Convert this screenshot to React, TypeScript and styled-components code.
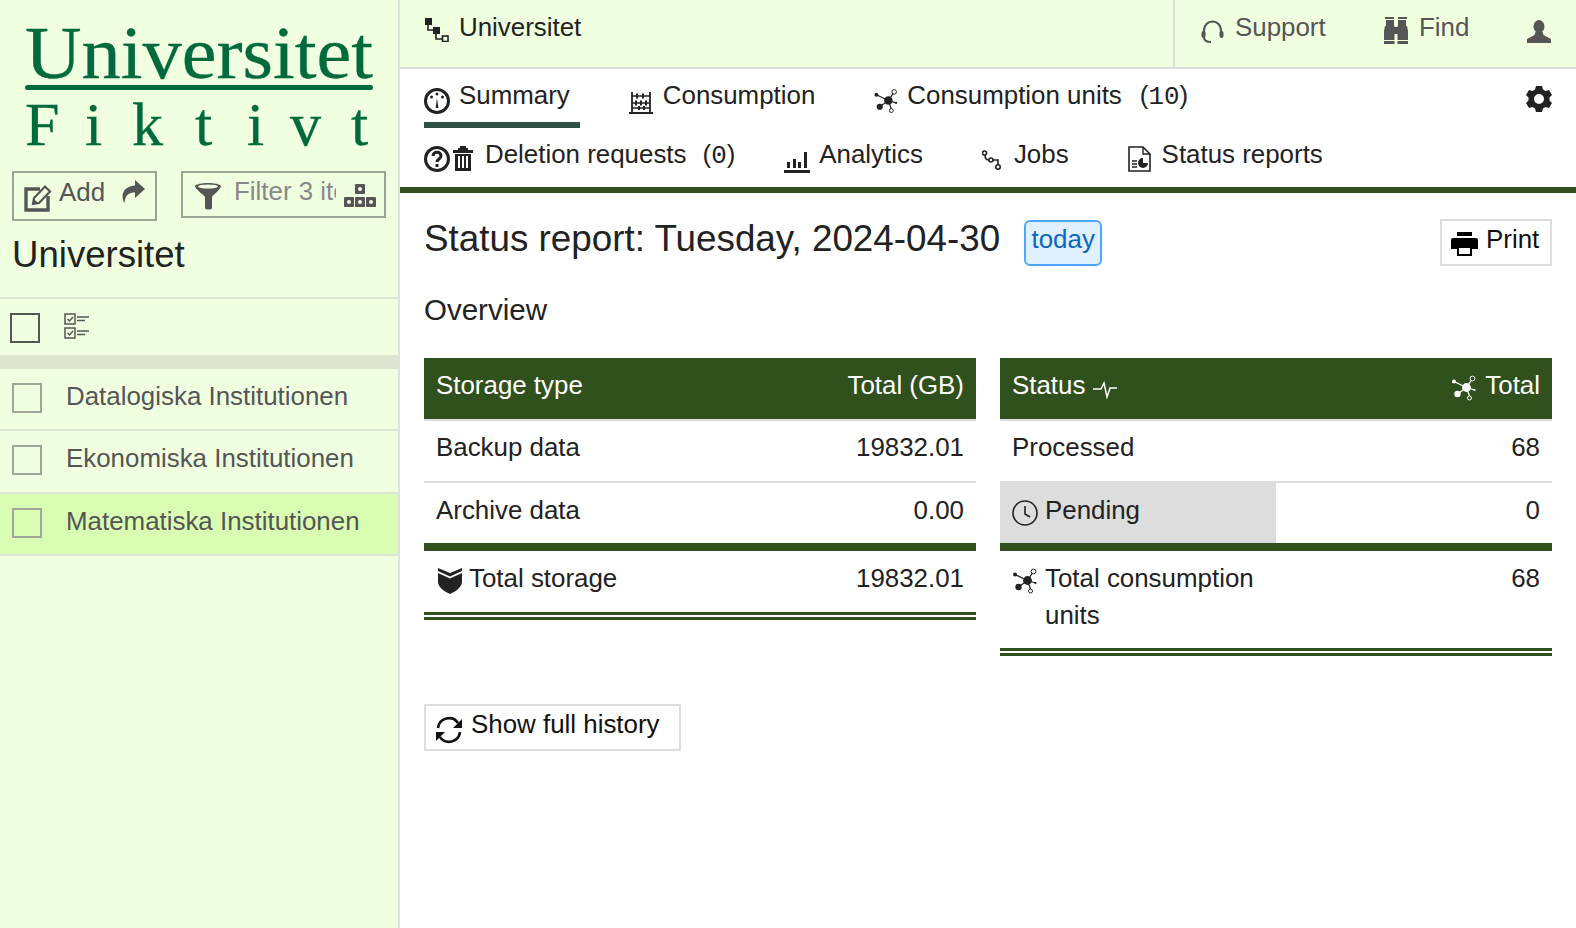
import React from 'react';
import styled, { createGlobalStyle } from 'styled-components';

const Global = createGlobalStyle`
  html, body { margin: 0; padding: 0; background: #fff; }
  body { font-family: "Liberation Sans", Arial, sans-serif; font-size: 25.9px; line-height: 37px; color: #222; }
  * { box-sizing: border-box; }
`;

const Page = styled.div`display: flex; height: 928px; overflow: hidden;`;
const Sidebar = styled.aside`
  width: 400px; flex: none; background: #f0ffe0; border-right: 2px solid #dde3d6; color: #555;
`;
const Logo = styled.svg`display: block; width: 398px; height: 171px;`;
const ToolRow = styled.div`display: flex; align-items: flex-start; gap: 24px; padding-left: 12px;`;
const AddBox = styled.div`
  width: 145px; height: 50px; border: 2px solid #9ca594; display: flex; padding: 1px 0 0 9px; color: #555;
`;
const AddIcon = styled.svg`width: 29px; height: 29px; margin-top: 9px; flex: none;`;
const AddLabel = styled.span`margin-left: 7px; width: 62px; line-height: 37px;`;
const ShareIcon = styled.svg`width: 24px; height: 25px; margin-top: 5px; flex: none;`;
const FilterBox = styled.div`
  width: 205px; height: 47px; border: 2px solid #9ca594; display: flex; padding: 0 0 0 11px;
`;
const FunnelIcon = styled.svg`width: 28px; height: 28px; margin-top: 9px; flex: none;`;
const FilterText = styled.span`
  margin-left: 12px; width: 102px; overflow: hidden; white-space: nowrap; color: #888;
`;
const ClusterIcon = styled.svg`width: 32px; height: 23px; margin: 11px 0 0 8px; flex: none;`;
const TreeTitle = styled.h2`
  margin: 0; padding: 13px 0 21px 12px; font-size: 36.6px; line-height: 42px; font-weight: 400; color: #222;
`;
const SelectRow = styled.div`
  height: 58px; border-top: 2px solid #dde5d0; display: flex; align-items: flex-start; padding: 14px 0 0 10px;
`;
const MasterBox = styled.span`width: 30px; height: 30px; border: 2px solid #555; flex: none;`;
const ListIcon = styled.svg`width: 26px; height: 28px; margin: -1px 0 0 24px; flex: none;`;
const Band = styled.div`height: 14px; background: #dde5d0;`;
const ItemRow = styled.div<{ $selected?: boolean; $height: number }>`
  height: ${(p) => p.$height}px; padding: 14px 0 0 12px; display: flex; align-items: flex-start;
  background: ${(p) => (p.$selected ? '#d9fdb3' : 'transparent')};
  border-bottom: 2px solid #dde5d0;
`;
const ItemBox = styled.span`width: 30px; height: 30px; border: 2px solid #a0a69a; flex: none;`;
const ItemText = styled.span`margin: -5px 0 0 24px; color: #555; white-space: nowrap;`;

const Main = styled.main`flex: 1; min-width: 0; display: flex; flex-direction: column;`;
const TopBar = styled.header`
  height: 69px; background: #f0ffe0; border-bottom: 2px solid #ddd; display: flex; flex: none;
`;
const Crumb = styled.div`flex: 1; display: flex; align-items: flex-start; padding: 9px 0 0 25px; gap: 10px;`;
const CrumbIcon = styled.svg`width: 24px; height: 24px; margin-top: 9px; flex: none;`;
const TopRight = styled.div`
  width: 403px; flex: none; border-left: 2px solid #ddd; display: flex; align-items: flex-start; padding: 9px 0 0 26px; color: #555;
`;
const TopLink = styled.span<{ $width: number; $gap: number }>`
  display: flex; align-items: flex-start; width: ${(p) => p.$width}px; gap: ${(p) => p.$gap}px;
`;
const TopIcon = styled.svg<{ $w: number; $h: number; $top: number }>`
  width: ${(p) => p.$w}px; height: ${(p) => p.$h}px; margin-top: ${(p) => p.$top}px; flex: none;
`;

const TabRow = styled.nav`height: 59px; flex: none; display: flex; align-items: flex-start; padding: 0 24px; gap: 49px;`;
const Tab = styled.a<{ $active?: boolean; $gap?: number }>`
  height: ${(p) => (p.$active ? 59 : 53)}px; display: flex; align-items: flex-start; padding: 8px 10px 0 0;
  gap: ${(p) => p.$gap ?? 10}px; white-space: nowrap; color: #222;
  border-bottom: ${(p) => (p.$active ? '6px solid #2f5045' : 'none')};
`;
const Count = styled.span<{ $lead: number }>`margin: 0 -10px 0 ${(p) => p.$lead}px;`;
const Digits = styled.span`font-family: "Liberation Mono", "DejaVu Sans Mono", monospace;`;
const TabIcon = styled.svg<{ $w?: number; $top?: number }>`
  width: ${(p) => p.$w ?? 26}px; height: 26px; margin-top: ${(p) => p.$top ?? 11}px; flex: none;
`;
const IconPair = styled.span`display: flex; gap: 3px; flex: none;`;
const GearIcon = styled.svg`width: 26px; height: 26px; margin: 17px 0 0 auto; flex: none;`;
const GreenBar = styled.div`height: 6px; background: #30501e; flex: none;`;

const Content = styled.section`padding: 26px 24px 0; flex: 1;`;
const HeadRow = styled.div`display: flex; align-items: flex-start; height: 47px;`;
const ReportTitle = styled.h1`margin: 0; font-size: 36.8px; line-height: 39px; font-weight: 400; color: #222; white-space: nowrap;`;
const TodayBadge = styled.span`
  margin: 1px 0 0 24px; width: 78px; height: 46px; border: 2px solid #4da6ff; border-radius: 6px; background: #e0f0ff;
  color: #0a66c2; text-align: center; line-height: 34px;
`;
const GhostButton = styled.button`
  display: flex; align-items: flex-start; height: 47px; border: 2px solid #ddd; background: #fff; color: #111;
  font: inherit; padding: 0 0 0 9px; cursor: pointer; white-space: nowrap;
`;
const PrintButton = styled(GhostButton)`margin-left: auto; width: 112px; gap: 8px;`;
const PrintIcon = styled.svg`width: 27px; height: 24px; margin-top: 11px; flex: none;`;
const Overview = styled.h3`margin: 25px 0 30px; font-size: 29.5px; line-height: 37px; font-weight: 400; color: #222;`;
const Tables = styled.div`display: flex; gap: 24px; align-items: flex-start;`;
const Table = styled.table`
  flex: 1; min-width: 0; border-collapse: separate; border-spacing: 0; table-layout: fixed; width: 552px;
`;
const Th = styled.th<{ $right?: boolean }>`
  background: #30501e; color: #fff; font-weight: 400; padding: 9px 12px 15px; text-align: ${(p) => (p.$right ? 'right' : 'left')};
  border-bottom: 2px solid #ddd;
`;
const Td = styled.td<{ $right?: boolean; $pending?: boolean; $last?: boolean; $total?: boolean; $tall?: boolean }>`
  padding: ${(p) => (p.$tall ? '9px 12px 14px' : p.$total ? '9px 12px 15px' : p.$last ? '9px 12px 14px' : '8px 12px 15px')};
  text-align: ${(p) => (p.$right ? 'right' : 'left')};
  vertical-align: top;
  background: ${(p) => (p.$pending ? '#ddd' : '#fff')};
  color: #222;
  border-bottom: ${(p) => (p.$total ? '8px double #30501e' : p.$last ? '8px solid #30501e' : '2px solid #ddd')};
`;
const CellFlex = styled.span<{ $gap?: number; $indent?: number }>`
  display: flex; gap: ${(p) => p.$gap ?? 7}px; align-items: flex-start; padding-left: ${(p) => p.$indent ?? 0}px;
`;
const HeadFlex = styled.span<{ $right?: boolean }>`
  display: flex; gap: 8px; align-items: flex-start; justify-content: ${(p) => (p.$right ? 'flex-end' : 'flex-start')};
`;
const CellIcon = styled.svg<{ $w?: number; $top?: number }>`
  width: ${(p) => p.$w ?? 26}px; height: 26px; margin-top: ${(p) => p.$top ?? 8}px; flex: none;
`;
const HistoryButton = styled(GhostButton)`margin-top: 48px; width: 257px; gap: 8px; color: #111;`;
const RefreshIcon = styled.svg`width: 28px; height: 28px; margin-top: 10px; flex: none;`;

const hubShapes = (
  <>
    <path d="M15 12.5 6 19M15 12.5 2.5 6.5M15 12.5 20 5M15 12.5 23 15M15 12.5 18 21" stroke="currentColor" strokeWidth="1.3" fill="none" />
    <circle cx="15" cy="12.5" r="4.4" fill="currentColor" />
    <circle cx="6" cy="19" r="3.2" fill="currentColor" />
    <circle cx="2.5" cy="6.5" r="2" fill="currentColor" />
    <circle cx="23" cy="15" r="1.1" fill="currentColor" />
    <circle cx="21" cy="3.5" r="2.4" fill="none" stroke="currentColor" strokeWidth="1" />
    <circle cx="18" cy="23" r="2" fill="none" stroke="currentColor" strokeWidth="1" />
  </>
);

const LogoMark = () => (
  <Logo viewBox="0 0 398 171">
    <text x="25" y="78" fontFamily='"Liberation Serif", serif' fontSize="74" fill="#006a3c" stroke="#006a3c" strokeWidth="0.3" textLength="348" lengthAdjust="spacingAndGlyphs">Universitet</text>
    <rect x="25" y="85" width="348" height="5" rx="2.5" fill="#006a3c" />
    <text x="25 85 132 195 247 290 351" y="145" fontFamily='"Liberation Serif", serif' fontSize="62" fill="#006a3c" stroke="#006a3c" strokeWidth="0.3">Fiktivt</text>
  </Logo>
);

const ListGlyph = () => (
  <ListIcon viewBox="0 0 26 28" fill="none" stroke="#555">
    <rect x="1" y="2" width="10" height="10" strokeWidth="1.5" />
    <rect x="1" y="16" width="10" height="10" strokeWidth="1.5" />
    <path d="M3.5 7 5.5 9 9 5M3.5 21 5.5 23 9 19" strokeWidth="1.5" />
    <path d="M13 5h12M13 8.5h8M13 19h12M13 22.5h8" strokeWidth="1.4" />
  </ListIcon>
);

const App = () => (
  <Page>
    <Global />
    <Sidebar>
      <LogoMark />
      <ToolRow>
        <AddBox>
          <AddIcon viewBox="0 0 29 29" fill="none">
            <path d="M17 6H3v21h22V13" stroke="#555" strokeWidth="3.4" />
            <path d="M10 21l1-6L22 3.500l5 5L16 20z" stroke="#555" strokeWidth="2.2" />
            <path d="M10 21l1-5 4 4z" fill="#555" />
          </AddIcon>
          <AddLabel>Add</AddLabel>
          <ShareIcon viewBox="0 0 24 25">
            <path d="M14 1l10 9-10 9v-5.500C8 13.500 4 16 3.500 24 .5 20-1 8 14 6.500z" fill="#555" />
          </ShareIcon>
        </AddBox>
        <FilterBox>
          <FunnelIcon viewBox="0 0 28 28">
            <path d="M1 4C3 0 25 0 27 4c0 3-8 9-9 11v11c0 2-7 2-7 0V15C10 13 1 7 1 4z" fill="#555" />
            <ellipse cx="14" cy="4.500" rx="10" ry="2" fill="#f0ffe0" />
          </FunnelIcon>
          <FilterText>Filter 3 items</FilterText>
          <ClusterIcon viewBox="0 0 32 23">
            <g fill="#555">
              <rect x="11" y="0" width="10" height="10" rx="1" />
              <rect x="0" y="13" width="10" height="10" rx="1" />
              <rect x="11" y="13" width="10" height="10" rx="1" />
              <rect x="22" y="13" width="10" height="10" rx="1" />
            </g>
            <g fill="#f0ffe0">
              <circle cx="16" cy="5" r="2" />
              <circle cx="5" cy="18" r="2" />
              <circle cx="16" cy="18" r="2" />
              <circle cx="27" cy="18" r="2" />
            </g>
          </ClusterIcon>
        </FilterBox>
      </ToolRow>
      <TreeTitle>Universitet</TreeTitle>
      <SelectRow>
        <MasterBox />
        <ListGlyph />
      </SelectRow>
      <Band />
      <ItemRow $height={62}><ItemBox /><ItemText>Datalogiska Institutionen</ItemText></ItemRow>
      <ItemRow $height={63}><ItemBox /><ItemText>Ekonomiska Institutionen</ItemText></ItemRow>
      <ItemRow $height={62} $selected><ItemBox /><ItemText>Matematiska Institutionen</ItemText></ItemRow>
    </Sidebar>
    <Main>
      <TopBar>
        <Crumb>
          <CrumbIcon viewBox="0 0 24 24">
            <rect x="0" y="0" width="7" height="7" fill="#222" />
            <rect x="8" y="9" width="7" height="7" fill="#222" />
            <rect x="17.500" y="18" width="5.500" height="5.500" fill="none" stroke="#222" strokeWidth="1.6" />
            <path d="M3 7v5h5M11 16v5h6" fill="none" stroke="#222" strokeWidth="1.6" />
          </CrumbIcon>
          <span>Universitet</span>
        </Crumb>
        <TopRight>
          <TopLink $width={182} $gap={11}>
            <TopIcon viewBox="0 0 23 23" $w={23} $h={23} $top={11} fill="none">
              <path d="M3 15V10a8.500 8.500 0 0 1 17 0v5" stroke="#555" strokeWidth="2.2" />
              <rect x="0.500" y="11" width="4" height="7" rx="2" fill="#555" />
              <rect x="18.500" y="11" width="4" height="7" rx="2" fill="#555" />
              <path d="M3 17c0 4 3 5 7 5" stroke="#555" strokeWidth="2" />
            </TopIcon>
            <span>Support</span>
          </TopLink>
          <TopLink $width={144} $gap={10}>
            <TopIcon viewBox="0 0 26 27" $w={26} $h={27} $top={8} fill="#555">
              <rect x="2" y="0" width="9" height="2" />
              <rect x="15" y="0" width="9" height="2" />
              <rect x="3" y="3" width="8" height="6" />
              <rect x="15" y="3" width="8" height="6" />
              <rect x="11" y="10" width="4" height="7" />
              <path d="M2 9h9.500v14H1V14zM14.500 9H24l1 5v9H14.500z" />
              <rect x="1" y="24" width="10.500" height="3" />
              <rect x="14.500" y="24" width="10.500" height="3" />
            </TopIcon>
            <span>Find</span>
          </TopLink>
          <TopIcon viewBox="0 0 24 23" $w={24} $h={23} $top={11} fill="#555">
            <ellipse cx="12" cy="6.500" rx="5.500" ry="6.500" />
            <path d="M8.500 12h7l1 3 7.500 4v4H0v-4l7.500-4z" />
          </TopIcon>
        </TopRight>
      </TopBar>
      <TabRow>
        <Tab $active $gap={9}>
          <TabIcon viewBox="0 0 26 26" fill="none">
            <circle cx="13" cy="13" r="11.500" stroke="#222" strokeWidth="3" />
            <path d="M13 10l1.400 10h-2.800z" fill="#222" />
            <circle cx="13" cy="6" r="1.500" fill="#222" />
            <circle cx="7.500" cy="9" r="1.500" fill="#222" />
            <circle cx="18.500" cy="9" r="1.500" fill="#222" />
          </TabIcon>
          <span>Summary</span>
        </Tab>
        <Tab>
          <TabIcon viewBox="0 0 24 26" $w={24} fill="none" stroke="#222">
            <path d="M3 4v20M21 4v20M0 25h24" strokeWidth="1.800" />
            <path d="M3 8h18M3 15h18M3 20h18" strokeWidth="1.400" />
            <path d="M8 5.500v5M14 5.500v5M7 12.500v5M12 12.500v5M17 12.500v5M10 18v4M15 18v4" strokeWidth="2" />
          </TabIcon>
          <span>Consumption</span>
        </Tab>
        <Tab $gap={9}>
          <TabIcon viewBox="0 0 25 26" $w={24} color="#222">{hubShapes}</TabIcon>
          <span>Consumption units</span>
          <Count $lead={9}>(<Digits>10</Digits>)</Count>
        </Tab>
        <GearIcon viewBox="0 0 26 26">
          <path fillRule="evenodd" fill="#222" d="M10 0h6l1 3.500 2.500 1.400 3.500-1 3 5-2.500 2.600v3l2.500 2.600-3 5-3.500-1-2.500 1.400L16 26h-6l-1-3.500-2.500-1.400-3.500 1-3-5 2.500-2.600v-3L0 8.900l3-5 3.500 1L9 3.500zM13 8a5 5 0 1 0 0 10 5 5 0 0 0 0-10z" />
        </GearIcon>
      </TabRow>
      <TabRow>
        <Tab $gap={12}>
          <IconPair>
            <TabIcon viewBox="0 0 26 26" fill="none" $top={10}>
              <circle cx="13" cy="13" r="11.500" stroke="#222" strokeWidth="3" />
              <path d="M9 10c0-5 8-5 8 0 0 3-4 3-4 6" stroke="#222" strokeWidth="3" />
              <rect x="11.500" y="18" width="3" height="3" fill="#222" />
            </TabIcon>
            <TabIcon viewBox="0 0 20 26" $w={20} $top={9} fill="#222">
              <path d="M7 1h6v2h-6zM5 3h10v2H5zM0 5h20v3H0z" />
              <path fillRule="evenodd" d="M2 9h16v17H2zM5 11v12h2V11zM9 11v12h2V11zM13 11v12h2V11z" />
            </TabIcon>
          </IconPair>
          <span>Deletion requests</span>
          <Count $lead={4}>(<Digits>0</Digits>)</Count>
        </Tab>
        <Tab $gap={9}>
          <TabIcon viewBox="0 0 26 22" $top={13} fill="#222">
            <rect x="0" y="19" width="26" height="3" />
            <rect x="3" y="11" width="3" height="6" />
            <rect x="9" y="8" width="3" height="9" />
            <rect x="14" y="11" width="3" height="6" />
            <rect x="20" y="1" width="3" height="16" />
          </TabIcon>
          <span>Analytics</span>
        </Tab>
        <Tab $gap={13}>
          <TabIcon viewBox="0 0 19 26" $w={19} $top={12} fill="none" stroke="#222" strokeWidth="1.600">
            <circle cx="2.500" cy="5" r="2" />
            <circle cx="9" cy="12" r="2" />
            <circle cx="16" cy="19" r="2.200" />
            <path d="M3 7c0 4 2 5 4 5M11 12h5v5" />
          </TabIcon>
          <span>Jobs</span>
        </Tab>
        <Tab $gap={11}>
          <TabIcon viewBox="0 0 23 26" $w={23} $top={10} fill="none">
            <path d="M1 1h14l7 7v17H1z" stroke="#222" strokeWidth="1.600" />
            <path d="M15 1v7h7" stroke="#222" strokeWidth="1.400" />
            <path d="M4 15h5M4 18h5M4 21h5" stroke="#222" strokeWidth="1.400" />
            <path d="M15 12a5 5 0 1 0 5 5h-5z" fill="#222" />
          </TabIcon>
          <span>Status reports</span>
        </Tab>
      </TabRow>
      <GreenBar />
      <Content>
        <HeadRow>
          <ReportTitle>Status report: Tuesday, 2024-04-30</ReportTitle>
          <TodayBadge>today</TodayBadge>
          <PrintButton>
            <PrintIcon viewBox="0 0 27 24">
              <rect x="6" y="0" width="15" height="4" fill="#000" />
              <path fillRule="evenodd" fill="#000" d="M2 6h23a2 2 0 0 1 2 2v9h-6v-3H6v3H0V8a2 2 0 0 1 2-2z" />
              <rect x="7" y="15" width="13" height="8" fill="#fff" stroke="#000" strokeWidth="2" />
            </PrintIcon>
            <span>Print</span>
          </PrintButton>
        </HeadRow>
        <Overview>Overview</Overview>
        <Tables>
          <Table>
            <thead>
              <tr><Th>Storage type</Th><Th $right>Total (GB)</Th></tr>
            </thead>
            <tbody>
              <tr><Td>Backup data</Td><Td $right>19832.01</Td></tr>
              <tr><Td $last>Archive data</Td><Td $right $last>0.00</Td></tr>
              <tr>
                <Td $total>
                  <CellFlex $indent={2}>
                    <CellIcon viewBox="0 0 24 26" $w={24} $top={8}>
                      <path d="M0 0l12 5 12-5v3L12 8.500 0 3z" fill="#222" />
                      <path d="M0 5l12 5.500L24 5v9c0 5-7 10-12 12C7 24 0 19 0 14z" fill="#222" />
                    </CellIcon>
                    <span>Total storage</span>
                  </CellFlex>
                </Td>
                <Td $right $total>19832.01</Td>
              </tr>
            </tbody>
          </Table>
          <Table>
            <thead>
              <tr>
                <Th>
                  <HeadFlex>
                    <span>Status</span>
                    <CellIcon viewBox="0 0 24 18" $w={24} $top={9} fill="none" stroke="#fff" strokeWidth="1.500">
                      <path d="M0 9h8l3-6 3 14 3-9h7" />
                    </CellIcon>
                  </HeadFlex>
                </Th>
                <Th $right>
                  <HeadFlex $right>
                    <CellIcon viewBox="0 0 25 26" $top={8} color="#fff">{hubShapes}</CellIcon>
                    <span>Total</span>
                  </HeadFlex>
                </Th>
              </tr>
            </thead>
            <tbody>
              <tr><Td>Processed</Td><Td $right>68</Td></tr>
              <tr>
                <Td $last $pending>
                  <CellFlex>
                    <CellIcon viewBox="0 0 26 26" fill="none" stroke="#222" $top={8}>
                      <circle cx="13" cy="13" r="12" strokeWidth="1.600" />
                      <path d="M13 6v8l5 3" strokeWidth="1.600" />
                    </CellIcon>
                    <span>Pending</span>
                  </CellFlex>
                </Td>
                <Td $right $last>0</Td>
              </tr>
              <tr>
                <Td $total $tall>
                  <CellFlex>
                    <CellIcon viewBox="0 0 25 26" $top={8} color="#222">{hubShapes}</CellIcon>
                    <span>Total consumption units</span>
                  </CellFlex>
                </Td>
                <Td $right $total $tall>68</Td>
              </tr>
            </tbody>
          </Table>
        </Tables>
        <HistoryButton>
          <RefreshIcon viewBox="0 0 28 28" fill="none">
            <path d="M3 12A11 11 0 0 1 23 7" stroke="#111" strokeWidth="2.600" />
            <path d="M25 16A11 11 0 0 1 5 21" stroke="#111" strokeWidth="2.600" />
            <path d="M27 3v9h-9zM1 25v-9h9z" fill="#111" />
          </RefreshIcon>
          <span>Show full history</span>
        </HistoryButton>
      </Content>
    </Main>
  </Page>
);

export default App;
